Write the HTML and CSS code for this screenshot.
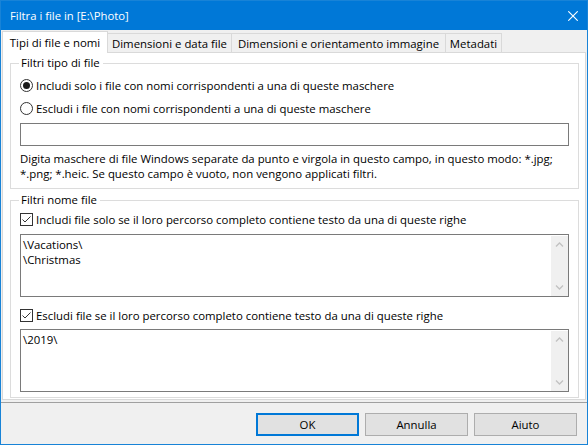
FILE: index.html
```html
<!DOCTYPE html>
<html lang="it">
<head>
<meta charset="utf-8">
<title>Filtra i file in [E:\Photo]</title>
<link rel="stylesheet" href="styles.css">
</head>
<body>
<div class="window">
  <div class="titlebar">
    <span class="title">Filtra i file in [E:\Photo]</span>
    <svg class="close" width="10" height="10" viewBox="0 0 10 10"><path d="M0.3 0.3L9.7 9.7M9.7 0.3L0.3 9.7" stroke="#fff" stroke-width="1.1" fill="none"/></svg>
  </div>
  <div class="tabstrip">
    <div class="tab active w1">Tipi di file e nomi</div>
    <div class="tab w2">Dimensioni e data file</div>
    <div class="tab w3">Dimensioni e orientamento immagine</div>
    <div class="tab w4">Metadati</div>
  </div>
  <div class="panel">
    <fieldset class="group g1">
      <legend>Filtri tipo di file</legend>
      <div class="row first"><span class="radio checked"></span><span>Includi solo i file con nomi corrispondenti a una di queste maschere</span></div>
      <div class="row"><span class="radio"></span><span>Escludi i file con nomi corrispondenti a una di queste maschere</span></div>
      <div class="input"></div>
      <p class="desc">Digita maschere di file Windows separate da punto e virgola in questo campo, in questo modo: *.jpg;<br>*.png; *.heic. Se questo campo è vuoto, non vengono applicati filtri.</p>
    </fieldset>
    <fieldset class="group g2">
      <legend>Filtri nome file</legend>
      <div class="row"><span class="check"><svg width="11" height="11" viewBox="0 0 11 11"><path d="M1.5 5.5L4 8L9.5 2.5" stroke="#333" stroke-width="1" fill="none"/></svg></span><span>Includi file solo se il loro percorso completo contiene testo da una di queste righe</span></div>
      <div class="memo m1">
        <div class="memo-text">\Vacations\<br>\Christmas</div>
        <div class="scrollbar">
          <svg width="17" height="17" viewBox="0 0 17 17"><path d="M5 10.5L8.5 7L12 10.5" stroke="#c2c2c2" stroke-width="1.3" fill="none"/></svg>
          <svg width="17" height="17" viewBox="0 0 17 17"><path d="M5 6.5L8.5 10L12 6.5" stroke="#c2c2c2" stroke-width="1.3" fill="none"/></svg>
        </div>
      </div>
      <div class="row r2"><span class="check"><svg width="11" height="11" viewBox="0 0 11 11"><path d="M1.5 5.5L4 8L9.5 2.5" stroke="#333" stroke-width="1" fill="none"/></svg></span><span>Escludi file se il loro percorso completo contiene testo da una di queste righe</span></div>
      <div class="memo m2">
        <div class="memo-text">\2019\</div>
        <div class="scrollbar">
          <svg width="17" height="17" viewBox="0 0 17 17"><path d="M5 10.5L8.5 7L12 10.5" stroke="#c2c2c2" stroke-width="1.3" fill="none"/></svg>
          <svg width="17" height="17" viewBox="0 0 17 17"><path d="M5 6.5L8.5 10L12 6.5" stroke="#c2c2c2" stroke-width="1.3" fill="none"/></svg>
        </div>
      </div>
    </fieldset>
  </div>
  <div class="gap"></div>
  <div class="footer">
    <div class="btn default">OK</div>
    <div class="btn">Annulla</div>
    <div class="btn">Aiuto</div>
  </div>
</div>
</body>
</html>
```

FILE: styles.css
```css
* { box-sizing: border-box; }
html, body { margin: 0; padding: 0; }
body {
  background: #f0f0f0;
  font-family: "Open Sans", "Noto Sans", "Liberation Sans", sans-serif;
  font-size: 11.4px;
  color: #000;
}
.window {
  width: 588px;
  height: 445px;
  border: 1px solid #1883d7;
  display: flex;
  flex-direction: column;
  background: #f0f0f0;
}
.titlebar {
  height: 29px;
  flex: none;
  background: #0078d7;
  color: #fff;
  display: flex;
  align-items: center;
  justify-content: space-between;
  padding: 0 9px 0 9px;
}
.title { line-height: 16px; font-size: 11.3px; }
.close { display: block; }
.tabstrip {
  height: 22px;
  flex: none;
  display: flex;
  align-items: flex-end;
  padding-left: 1px;
}
.tab {
  height: 19px;
  border: 1px solid #d9d9d9;
  border-bottom: none;
  background: #f0f0f0;
  display: flex;
  align-items: center;
  justify-content: center;
  white-space: nowrap;
  margin-left: -1px;
  line-height: 16px;
  padding-top: 2px;
}
.tab.active {
  height: 22px;
  margin-bottom: -1px;
  margin-left: 0;
  background: #fff;
  position: relative;
  z-index: 1;
  padding-top: 1px;
}
.w1 { width: 106px; }
.w2 { width: 125px; }
.w3 { width: 215px; }
.w4 { width: 57px; }
.panel {
  height: 348px;
  flex: none;
  margin: 0 1px;
  border: 1px solid #d9d9d9;
  background: #fff;
  padding: 0 6px 0 7px;
}
.group {
  margin: 0;
  min-width: 0;
  border: 1px solid #dcdcdc;
  padding: 0 9px;
}
.group legend {
  padding: 0 3px 0 2px;
  margin-left: -1px;
  line-height: 16px;
}
.g1 { margin-top: 2px; padding-bottom: 7px; }
.g2 { margin-top: 3px; padding-bottom: 5px; }
.row {
  height: 23px;
  display: flex;
  align-items: center;
  white-space: nowrap;
  line-height: 16px;
}
.row.first { margin-top: 3px; }
.row.r2 { margin-top: 7px; }
.radio {
  width: 13px;
  height: 13px;
  flex: none;
  border: 1px solid #333;
  border-radius: 50%;
  background: #fff;
  margin-right: 3px;
  display: flex;
  align-items: center;
  justify-content: center;
}
.radio.checked::after {
  content: "";
  width: 7px;
  height: 7px;
  border-radius: 50%;
  background: #1a1a1a;
}
.check {
  width: 13px;
  height: 13px;
  flex: none;
  border: 1px solid #333;
  background: #fff;
  margin-right: 3px;
  display: flex;
}
.check svg { display: block; }
.input {
  margin-top: 3px;
  height: 23px;
  border: 1px solid #7a7a7a;
  background: #fff;
}
.desc {
  margin: 5px 0 0 0;
  line-height: 15px;
  white-space: nowrap;
}
.memo {
  height: 63px;
  border: 1px solid #7a7a7a;
  background: #fff;
  display: flex;
}
.m1 { margin-top: 3px; }
.m2 { margin-top: 2px; }
.memo-text {
  flex: 1;
  padding: 2px 2px;
  line-height: 15px;
}
.scrollbar {
  width: 17px;
  flex: none;
  margin-top: 1px;
  background: #f0f0f0;
  display: flex;
  flex-direction: column;
  justify-content: space-between;
}
.scrollbar svg { display: block; }
.gap { height: 2px; flex: none; }
.footer {
  flex: 1;
  border-top: 1px solid #a0a0a0;
  display: flex;
  justify-content: flex-end;
  align-items: flex-start;
  gap: 6px;
  padding: 10px 10px 0 0;
}
.btn {
  width: 103px;
  height: 23px;
  border: 1px solid #adadad;
  background: #e1e1e1;
  display: flex;
  align-items: center;
  justify-content: center;
  line-height: 16px;
}
.btn.default { border: 2px solid #0078d7; }
```
